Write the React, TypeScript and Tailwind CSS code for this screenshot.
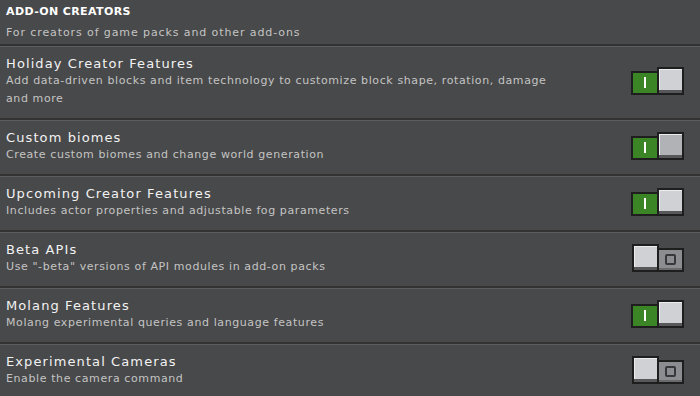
import React from "react";

type Row = { title: string; desc: string[]; on: boolean; hover?: boolean };

const rows: Row[] = [
  {
    title: "Holiday Creator Features",
    desc: [
      "Add data-driven blocks and item technology to customize block shape, rotation, damage",
      "and more",
    ],
    on: true,
  },
  { title: "Custom biomes", desc: ["Create custom biomes and change world generation"], on: true, hover: true },
  { title: "Upcoming Creator Features", desc: ["Includes actor properties and adjustable fog parameters"], on: true },
  { title: "Beta APIs", desc: ['Use "-beta" versions of API modules in add-on packs'], on: false },
  { title: "Molang Features", desc: ["Molang experimental queries and language features"], on: true },
  { title: "Experimental Cameras", desc: ["Enable the camera command"], on: false },
];

function Knob({ hover }: { hover?: boolean }) {
  return (
    <div className="h-[28px] w-[27px] border-2 border-[#1e1e1f] flex flex-col">
      <div className={`flex-1 border-t border-l border-[#ececee] ${hover ? "bg-[#b1b2b5]" : "bg-[#d0d1d4]"}`} />
      <div className="h-[3px] bg-[#58585a]" />
    </div>
  );
}

function Toggle({ on, hover }: { on: boolean; hover?: boolean }) {
  if (on) {
    return (
      <div className="flex items-end mb-[3px]">
        <div className="h-[24px] w-[26px] border-2 border-r-0 border-[#1e1e1f] bg-[#3c8527] flex items-center justify-center">
          <div className="w-[2px] h-[11px] bg-white" />
        </div>
        <Knob hover={hover} />
      </div>
    );
  }
  return (
    <div className="flex items-end mb-[3px]">
      <Knob hover={hover} />
      <div className="h-[24px] w-[25px] border-2 border-l-0 border-[#1e1e1f] bg-[#8c8d90] flex flex-col">
        <div className="flex-1 flex items-center justify-center pt-[1px]">
          <div className="w-[11px] h-[11px] border-2 border-[#38383a] rounded-[2px]" />
        </div>
        <div className="h-[2px] bg-[#6a6a6c]" />
      </div>
    </div>
  );
}

export default function App() {
  return (
    <div
      className="w-[700px] h-[396px] overflow-hidden bg-[#48494a] text-white"
      style={{ fontFamily: '"DejaVu Sans", "Liberation Sans", sans-serif' }}
    >
      <div className="px-[6px] pt-[3px] pb-[2px] border-b-2 border-[#333334]">
        <div className="h-[18px] leading-[18px] text-[11px] font-bold tracking-[0.4px] text-white">
          ADD-ON CREATORS
        </div>
        <div className="mt-[3px] h-[18px] leading-[18px] text-[11px] text-[#c4c4c4] tracking-[0.9px]">
          For creators of game packs and other add-ons
        </div>
      </div>
      {rows.map((r) => (
        <div
          key={r.title}
          className="flex items-center border-t border-[#5c5d5e] border-b-2 border-b-[#333334] pl-[6px] pr-[16px] pt-[9px] pb-[10px]"
        >
          <div className="flex-1">
            <div className="h-[16px] leading-[16px] text-[13px] text-[#f2f2f2] tracking-[1.1px]">{r.title}</div>
            {r.desc.map((d) => (
              <div key={d} className="h-[18px] leading-[18px] text-[11px] text-[#c4c4c4] tracking-[0.6px]">
                {d}
              </div>
            ))}
          </div>
          <Toggle on={r.on} hover={r.hover} />
        </div>
      ))}
    </div>
  );
}
